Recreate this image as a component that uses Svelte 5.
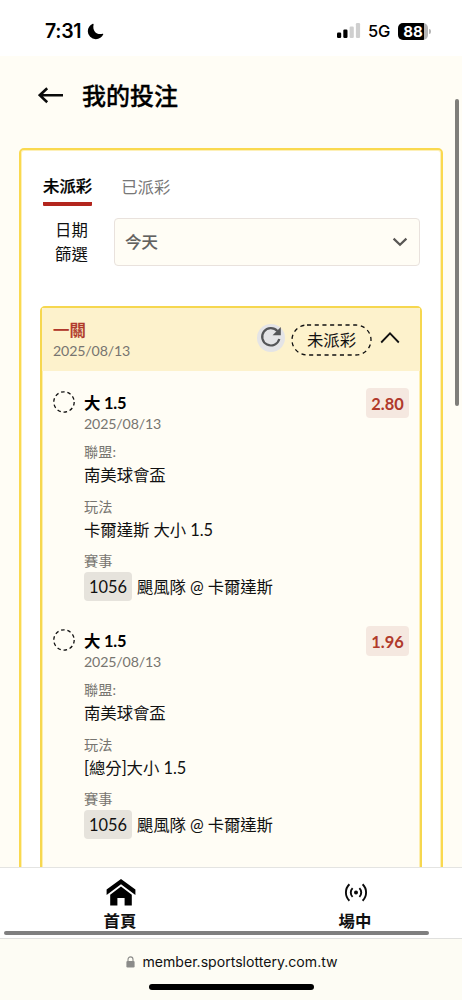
<script>
  const tabs = ['未派彩', '已派彩']
  let activeTab = $state('未派彩')
  let open = $state(true)

  const ticket = { title: '一關', date: '2025/08/13', status: '未派彩' }

  const bets = [
    {
      pick: '大 1.5',
      date: '2025/08/13',
      odds: '2.80',
      league: '南美球會盃',
      market: '卡爾達斯 大小 1.5',
      code: '1056',
      match: '颶風隊 @ 卡爾達斯',
    },
    {
      pick: '大 1.5',
      date: '2025/08/13',
      odds: '1.96',
      league: '南美球會盃',
      market: '[總分]大小 1.5',
      code: '1056',
      match: '颶風隊 @ 卡爾達斯',
    },
  ]
</script>

<div class="screen">
  <header class="status">
    <div class="clock">
      <span>7:31</span>
      <svg width="17" height="17" viewBox="0 0 17 17">
        <path d="M5.8 .8C2.8 2 .8 4.8 .8 8.2a8 8 0 0 0 8 8c3.4 0 6.3-2 7.5-4.9.2-.5-.2-.8-.7-.6-5.3 1.8-10.6-2.6-9-9.3 .1-.5-.3-.8-.8-.6Z" />
      </svg>
    </div>
    <div class="signal">
      <svg width="24" height="16" viewBox="0 0 24 16">
        <rect x="0" y="9.5" width="4.2" height="5.5" rx="1.2" />
        <rect x="6.3" y="6.5" width="4.2" height="8.5" rx="1.2" />
        <rect x="12.6" y="3.5" width="4.2" height="11.5" rx="1.2" fill="#cfcfcf" />
        <rect x="18.9" y="0" width="4.2" height="15" rx="1.2" fill="#cfcfcf" />
      </svg>
      <span class="net">5G</span>
      <div class="battery"><span>88</span></div>
      <i class="cap"></i>
    </div>
  </header>

  <main class="page">
    <div class="heading">
      <svg width="26" height="18" viewBox="0 0 26 18" fill="none" stroke="#0a0a0a" stroke-width="2.6">
        <path d="M9.2 1.2 1.8 8.2l7.4 7M2 8.2h23" />
      </svg>
      <h1>我的投注</h1>
    </div>

    <section class="panel">
      <nav class="tabs">
        {#each tabs as tab}
          <button class="tab" class:active={tab === activeTab} onclick={() => (activeTab = tab)}>{tab}</button>
        {/each}
      </nav>

      <div class="filter">
        <div class="filter-label">日期<br />篩選</div>
        <button class="select">
          <span>今天</span>
          <svg width="16" height="10" viewBox="0 0 16 10" fill="none" stroke="#595754" stroke-width="2.2">
            <path d="M1.6 1.6 8 7.8l6.4-6.2" />
          </svg>
        </button>
      </div>

      <article class="ticket">
        <div class="ticket-head">
          <div class="ticket-name">
            <div class="ticket-title">{ticket.title}</div>
            <div class="date">{ticket.date}</div>
          </div>
          <button class="refresh" aria-label="refresh">
            <svg width="22" height="22" viewBox="0 0 22 22">
              <path d="M19.3 13A8.7 8.7 0 1 1 17.4 5" fill="none" stroke="#555658" stroke-width="2.2" />
              <path d="M20.8 1v8.2h-8.2Z" fill="#555658" />
            </svg>
          </button>
          <div class="pill">
            <svg width="81" height="32" viewBox="0 0 81 32">
              <rect x="1" y="1" width="79" height="30" rx="15" />
            </svg>
            <span>{ticket.status}</span>
          </div>
          <button class="caret" aria-label="toggle" onclick={() => (open = !open)}>
            <svg width="20" height="12" viewBox="0 0 20 12" fill="none" stroke="#111" stroke-width="1.8">
              <path d="M1.2 10.5 10 1.4l8.8 9.1" />
            </svg>
          </button>
        </div>

        {#if open}
          {#each bets as bet}
            <div class="bet">
              <svg class="ring" width="22" height="22" viewBox="0 0 22 22">
                <circle cx="11" cy="11" r="10.2" />
              </svg>
              <div class="info">
                <div class="pick">{bet.pick}</div>
                <div class="date">{bet.date}</div>
                <div class="label">聯盟:</div>
                <div class="value">{bet.league}</div>
                <div class="label">玩法</div>
                <div class="value">{bet.market}</div>
                <div class="label">賽事</div>
                <div class="match"><span class="code">{bet.code}</span>{bet.match}</div>
              </div>
              <div class="odds">{bet.odds}</div>
            </div>
          {/each}
        {/if}
      </article>
    </section>
    <i class="scroll-y"></i>
  </main>

  <nav class="bottom">
    <button class="nav-item">
      <svg width="30" height="28" viewBox="0 0 30 28">
        <path d="M15 0 29.4 10.6V16L15 5.2.6 16v-5.4Z" />
        <path d="M15 7.6 25.8 15.8V26.4h-7.2v-7.4h-7.2v7.4H4.2V15.8Z" />
      </svg>
      <span>首頁</span>
    </button>
    <button class="nav-item">
      <svg width="24" height="28" viewBox="0 0 24 28" fill="none" stroke="#0a0a0a" stroke-width="1.9">
        <circle cx="12" cy="13.5" r="2" fill="#0a0a0a" stroke="none" />
        <path d="M8.6 9.1a6.2 6.2 0 0 0 0 8.8M15.4 9.1a6.2 6.2 0 0 1 0 8.8M5.4 5.3a11.4 11.4 0 0 0 0 16.4M18.6 5.3a11.4 11.4 0 0 1 0 16.4" />
      </svg>
      <span>場中</span>
    </button>
    <i class="scroll-x"></i>
  </nav>

  <footer class="browser">
    <div class="url">
      <svg width="9" height="12" viewBox="0 0 9 12">
        <path d="M2 5.5V3.4a2.5 2.5 0 0 1 5 0v2.1" fill="none" stroke="#8b8b89" stroke-width="1.1" />
        <rect x=".4" y="4.9" width="8.2" height="6.6" rx="1.2" fill="#8b8b89" />
      </svg>
      <span>member.sportslottery.com.tw</span>
    </div>
    <i class="home-bar"></i>
  </footer>
</div>

<style>
  :global(body) {
    margin: 0;
    overflow: hidden;
  }
  .screen {
    width: 462px;
    height: 1000px;
    display: flex;
    flex-direction: column;
    overflow: hidden;
    background: #fffdf5;
    color: #111;
    font-family: Lato, 'Noto Sans CJK TC', sans-serif;
    font-size: 16.4px;
  }
  .screen :global(*) {
    box-sizing: border-box;
  }
  button {
    padding: 0;
    border: 0;
    background: none;
    font: inherit;
    color: inherit;
  }
  svg {
    display: block;
    flex: none;
  }

  .status {
    flex: none;
    height: 56px;
    padding: 6px 32px 0 45px;
    display: flex;
    justify-content: space-between;
    align-items: center;
    background: #fff;
    color: #000;
    font-family: Inter, sans-serif;
  }
  .clock {
    display: flex;
    align-items: center;
    gap: 6px;
    font-size: 19.5px;
    font-weight: 600;
    letter-spacing: -.3px;
  }
  .signal {
    display: flex;
    align-items: center;
  }
  .net {
    margin: 0 8px 0 7px;
    font-size: 16.5px;
    font-weight: 500;
    letter-spacing: -.3px;
  }
  .battery {
    width: 30px;
    height: 17px;
    border-radius: 5px;
    background: linear-gradient(90deg, #000 88%, #b5b5b5 88%);
    color: #fff;
    font-size: 15px;
    font-weight: 700;
    line-height: 17px;
    text-align: center;
  }
  .cap {
    width: 2px;
    height: 5px;
    margin-left: 1px;
    margin-right: -1px;
    border-radius: 0 2px 2px 0;
    background: #b5b5b5;
  }

  .page {
    flex: 1;
    min-height: 0;
    position: relative;
    overflow: hidden;
  }
  .heading {
    height: 92px;
    padding: 0 0 13px 38px;
    display: flex;
    align-items: center;
    gap: 18px;
  }
  h1 {
    margin: 0;
    color: #000;
    font-size: 24px;
    line-height: 30px;
    font-weight: 500;
    -webkit-text-stroke: .3px currentColor;
  }
  .panel {
    margin: 0 19px;
    height: 900px;
    padding: 20px 19px 0 19px;
    border: 2px solid #fad94f;
    border-radius: 5px;
    background: #fff;
    box-shadow: inset 0 0 0 1px #fdf0b8;
  }

  .tabs {
    display: flex;
    gap: 29px;
    padding-left: 3px;
  }
  .tab {
    height: 36px;
    border-bottom: 4px solid transparent;
    color: #777;
    line-height: 34px;
  }
  .tab.active {
    border-color: #b3261e;
    border-radius: 1px;
    color: #000;
    font-weight: 500;
    line-height: 32px;
    -webkit-text-stroke: .25px currentColor;
  }
  .filter {
    margin-top: 12px;
    padding-right: 2px;
    display: flex;
    align-items: center;
  }
  .filter-label {
    width: 74px;
    padding-left: 15px;
    line-height: 24px;
  }
  .select {
    flex: 1;
    height: 48px;
    padding: 0 11px 0 10px;
    display: flex;
    justify-content: space-between;
    align-items: center;
    border: 1px solid #e9e2dd;
    border-radius: 4px;
    background: #fffdf5;
    color: #62615e;
    font-weight: 500;
  }
  .select span {
    padding-bottom: 2px;
    -webkit-text-stroke: .15px currentColor;
  }

  .ticket {
    margin-top: 40px;
    height: 700px;
    border: 2px solid #f6d74f;
    border-radius: 5px;
    background: #fffdf5;
    box-shadow: inset 0 0 0 1px #fdeeae;
  }
  .ticket-head {
    height: 63px;
    padding: 0 20px 0 11px;
    display: flex;
    align-items: center;
    background: #fdf2cc;
  }
  .ticket-name {
    flex: 1;
  }
  .ticket-title {
    color: #b0392b;
    font-weight: 500;
    line-height: 22px;
    -webkit-text-stroke: .25px currentColor;
  }
  .date {
    color: #777570;
    font-size: 14.2px;
    letter-spacing: -.15px;
    line-height: 20px;
  }
  .refresh {
    width: 28px;
    height: 28px;
    margin-bottom: 3px;
    display: grid;
    place-items: center;
    border-radius: 50%;
    background: #e4e4e6;
  }
  .refresh svg {
    margin-bottom: 3px;
  }
  .pill {
    margin: 0 8px 0 6px;
    display: grid;
    place-items: center;
  }
  .pill svg,
  .pill span {
    grid-area: 1 / 1;
  }
  .pill span {
    padding-bottom: 2px;
  }
  .pill rect {
    fill: none;
    stroke: #111;
    stroke-width: 1.3;
    stroke-dasharray: 4.1 3.6;
  }
  .caret svg {
    margin-bottom: 3px;
  }

  .bet {
    height: 238px;
    padding: 17px 11px 0 11px;
    display: flex;
    align-items: flex-start;
  }
  .ring {
    margin-top: 3px;
  }
  .ring circle {
    fill: none;
    stroke: #111;
    stroke-width: 1.3;
    stroke-dasharray: 3.6 2.8;
  }
  .info {
    flex: 1;
    padding-left: 9px;
  }
  .pick {
    padding-top: 4px;
    color: #000;
    font-weight: 700;
    letter-spacing: -.2px;
    line-height: 22px;
  }
  .label {
    margin-top: 8px;
    color: #777570;
    font-size: 14.2px;
    line-height: 20px;
  }
  .value {
    padding-bottom: .6px;
    letter-spacing: -.05px;
    line-height: 26px;
  }
  .match {
    padding-top: 1px;
    display: flex;
    align-items: center;
    letter-spacing: -.1px;
    line-height: 29px;
  }
  .code {
    margin-right: 5px;
    padding: 0 5px;
    border-radius: 4px;
    background: #e6e3dc;
    letter-spacing: 0;
  }
  .odds {
    width: 43px;
    height: 30px;
    border-radius: 4px;
    background: #f5e8e0;
    color: #b0392b;
    font-weight: 700;
    line-height: 31px;
    text-align: center;
  }
  .scroll-y {
    position: absolute;
    top: 43px;
    right: 3px;
    width: 4px;
    height: 307px;
    border-radius: 2px;
    background: #7f7e7a;
  }

  .bottom {
    flex: none;
    height: 72px;
    margin-bottom: -1px;
    position: relative;
    display: flex;
    border-top: 1px solid #e4e4e2;
    border-bottom: 1px solid #e0e0de;
    background: #fff;
  }
  .nav-item {
    width: 235px;
    flex: none;
    padding: 11px 0 0 6px;
    display: flex;
    flex-direction: column;
    align-items: center;
    font-weight: 700;
  }
  .nav-item span {
    margin-top: 2px;
    padding-right: 1px;
    line-height: 24px;
  }
  .scroll-x {
    position: absolute;
    left: 4px;
    bottom: 3px;
    width: 425px;
    height: 4px;
    border-radius: 2px;
    background: #7f7f7f;
  }

  .browser {
    flex: none;
    height: 62px;
    padding-top: 13px;
    display: flex;
    flex-direction: column;
    align-items: center;
    background: #fdfcf4;
    font-family: Inter, sans-serif;
  }
  .url {
    padding-left: 2px;
    display: flex;
    align-items: center;
    gap: 7px;
    font-size: 14.1px;
    line-height: 21px;
  }
  .home-bar {
    width: 165px;
    height: 6px;
    margin-top: 12px;
    border-radius: 3px;
    background: #000;
  }
</style>
